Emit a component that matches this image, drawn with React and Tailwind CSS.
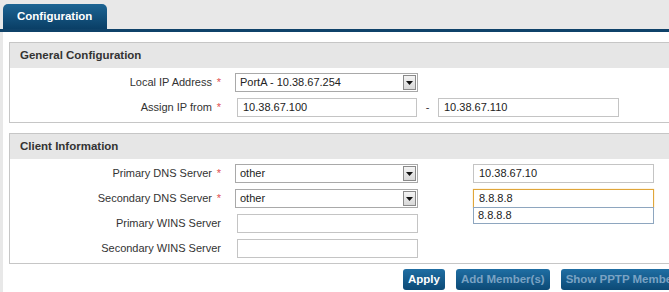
import React from 'react';

const font = { fontFamily: '"Liberation Sans", Arial, sans-serif' };

const Label = ({ text, required }) => (
  <div className="w-[212px] shrink-0 pr-[1px] text-right text-[11px] text-[#333]">
    {text}
    {required && <span className="inline-block w-[9px] text-right text-[#e05050]">*</span>}
  </div>
);

const Select = ({ value }) => (
  <div className="ml-[13px] flex h-[19px] w-[183px] items-center justify-between border border-[#a9a9a9] bg-white pl-[4px] pr-[1px]">
    <span className="text-[11px] text-[#222]">{value}</span>
    <span className="flex h-[15px] w-[13px] items-center justify-center border border-[#8a8a8a] bg-gradient-to-b from-[#f4f4f4] to-[#d8d8d8]">
      <svg width="7" height="4" viewBox="0 0 7 4">
        <path d="M0 0h7L3.5 4z" fill="#111" />
      </svg>
    </span>
  </div>
);

const Input = ({ value = '', focused, className = '' }) => (
  <div
    className={`flex h-[19px] items-center border bg-white pl-[5px] text-[11px] text-[#222] ${
      focused ? 'border-[#e0a63a] shadow-[0_0_1px_#f0c070]' : 'border-[#c4c4c4]'
    } ${className}`}
  >
    {value}
  </div>
);

const Section = ({ title, children }) => (
  <div className="ml-[6px] w-[700px] border border-[#c6c6c6]">
    <div className="flex h-[25px] items-center bg-[#e6e6e6] pl-[10px] text-[11.5px] font-bold text-[#333]">{title}</div>
    <div className="flex flex-col gap-[6px] py-[5px]">{children}</div>
  </div>
);

const Button = ({ children, disabled }) => (
  <div
    className={`flex h-[21px] items-center rounded-[3px] bg-gradient-to-b from-[#1f6ea3] to-[#0c4a76] px-[5px] text-[11.5px] font-bold whitespace-nowrap ${
      disabled ? 'text-[#7aa3c4]' : 'text-white'
    }`}
  >
    {children}
  </div>
);

export default function App() {
  return (
    <div className="h-[292px] w-[669px] overflow-hidden bg-[#e8e8e8]" style={font}>
      <div className="flex h-[29px] items-end pl-[3px]">
        <div className="flex h-[25px] w-[104px] items-center rounded-t-[5px] bg-gradient-to-b from-[#1d6594] to-[#0a3f66] pl-[14px] text-[11.5px] font-bold text-white">
          Configuration
        </div>
      </div>
      <div className="h-[3px] bg-[#0f4269]" />
      <div className="ml-[3px] h-[260px] bg-white pt-[10px]">
        <Section title="General Configuration">
          <div className="flex items-center">
            <Label text="Local IP Address" required />
            <Select value="PortA - 10.38.67.254" />
          </div>
          <div className="flex items-center">
            <Label text="Assign IP from" required />
            <Input value="10.38.67.100" className="ml-[15px] w-[180px]" />
            <span className="w-[21px] text-center text-[11px] text-[#333]">-</span>
            <Input value="10.38.67.110" className="w-[181px]" />
          </div>
        </Section>
        <div className="h-[10px]" />
        <Section title="Client Information">
          <div className="flex items-center">
            <Label text="Primary DNS Server" required />
            <Select value="other" />
            <Input value="10.38.67.10" className="ml-[55px] w-[181px]" />
          </div>
          <div className="flex items-center">
            <Label text="Secondary DNS Server" required />
            <Select value="other" />
            <div className="relative ml-[55px]">
              <Input value="8.8.8.8" focused className="w-[181px]" />
              <div className="absolute left-0 top-[18px] z-10 flex h-[17px] w-[181px] items-center border border-[#8ea6bf] bg-white pl-[4px] text-[11px] text-[#222]">
                8.8.8.8
              </div>
            </div>
          </div>
          <div className="flex items-center">
            <Label text="Primary WINS Server" />
            <Input className="ml-[15px] w-[181px]" />
          </div>
          <div className="flex items-center">
            <Label text="Secondary WINS Server" />
            <Input className="ml-[15px] w-[181px]" />
          </div>
        </Section>
        <div className="mt-[5px] flex gap-[11px] pl-[400px]">
          <Button>Apply</Button>
          <Button disabled>Add Member(s)</Button>
          <Button disabled>Show PPTP Members</Button>
        </div>
      </div>
    </div>
  );
}
